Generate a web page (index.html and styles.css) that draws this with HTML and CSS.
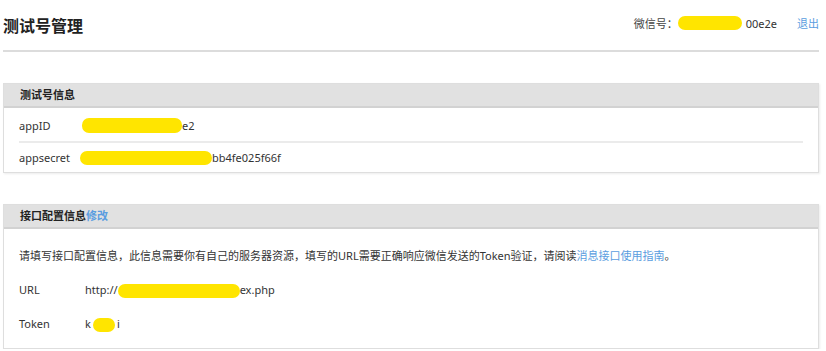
FILE: index.html
```html
<!DOCTYPE html>
<html lang="zh-CN">
<head>
    <meta charset="UTF-8">
    <title>测试号管理</title>
    <link rel="stylesheet" href="styles.css">
</head>
<body>
    <div class="page">
        <div class="page-head">
            <h1>测试号管理</h1>
            <div class="account">
                <span class="label">微信号：</span>
                <span class="mask mask-wx"></span>
                <span class="value">00e2e</span>
                <a class="link logout" href="#">退出</a>
            </div>
        </div>

        <div class="panel">
            <div class="panel-head">测试号信息</div>
            <div class="panel-body info-list">
                <div class="kv-row">
                    <span class="kv-label">appID</span>
                    <span class="mask mask-id"></span><span>e2</span>
                </div>
                <div class="kv-row">
                    <span class="kv-label">appsecret</span>
                    <span class="mask mask-secret"></span><span>bb4fe025f66f</span>
                </div>
            </div>
        </div>

        <div class="panel">
            <div class="panel-head">接口配置信息<a class="link" href="#">修改</a></div>
            <div class="panel-body config-list">
                <div class="kv-row">
                    请填写接口配置信息，此信息需要你有自己的服务器资源，填写的URL需要正确响应微信发送的Token验证，请阅读<a class="link" href="#">消息接口使用指南</a>。
                </div>
                <div class="kv-row">
                    <span class="kv-label">URL</span><span>http://</span><span class="mask mask-url"></span><span>ex.php</span>
                </div>
                <div class="kv-row">
                    <span class="kv-label">Token</span><span>k</span><span class="mask mask-token"></span><span>i</span>
                </div>
            </div>
        </div>
    </div>
</body>
</html>
```

FILE: styles.css
```css
body {
    margin: 0;
    font-family: "Noto Sans", "Noto Sans CJK SC", sans-serif;
    font-size: 11px;
    color: #333;
    background-color: #fff;
}

.page {
    width: 816px;
    margin-left: 3px;
}

.page-head {
    display: flex;
    justify-content: space-between;
    align-items: center;
    height: 50px;
    border-bottom: 2px solid #dcdcdc;
}

h1 {
    margin: 0;
    font-size: 16px;
    font-weight: bold;
    color: #222;
}

.account {
    display: flex;
    align-items: center;
    margin-top: -4px;
}

.account .label {
    color: #444;
}

.link {
    color: #5a9de0;
    text-decoration: none;
}

.logout {
    margin-left: 20px;
}

.mask {
    display: inline-block;
    height: 14px;
    background-color: #ffe500;
    border-radius: 7px;
}

.mask-wx {
    width: 64px;
    margin-right: 4px;
}

.mask-id {
    width: 100px;
    height: 15px;
    margin-left: 2px;
}

.mask-secret {
    width: 132px;
}

.mask-url {
    width: 122px;
}

.mask-token {
    width: 22px;
    margin: 0 2px;
}

.panel {
    margin-top: 31px;
    border: 1px solid #dedede;
    box-shadow: 1px 1px 2px rgba(0, 0, 0, 0.08);
}

.panel-head {
    height: 22px;
    line-height: 22px;
    padding-left: 16px;
    background-color: #e1e1e1;
    border-bottom: 2px solid #d2d2d2;
    font-weight: bold;
    color: #222;
}

.panel-head .link {
    font-weight: bold;
}

.panel-body {
    padding: 0 15px 0 15px;
}

.kv-row {
    display: flex;
    align-items: center;
}

.kv-label {
    flex-shrink: 0;
}

.info-list .kv-row {
    height: 32px;
}

.info-list .kv-row:first-child {
    margin-top: 1px;
}

.info-list .kv-row + .kv-row {
    height: 29px;
    border-top: 2px solid #ebebeb;
}

.info-list .kv-label {
    width: 61px;
}

.config-list {
    padding-top: 10px;
    padding-bottom: 7px;
}

.config-list .kv-row {
    height: 34px;
    display: block;
    line-height: 34px;
}

.config-list .kv-row .kv-label {
    display: inline-block;
    width: 66px;
}

.config-list .mask {
    vertical-align: middle;
}
```
